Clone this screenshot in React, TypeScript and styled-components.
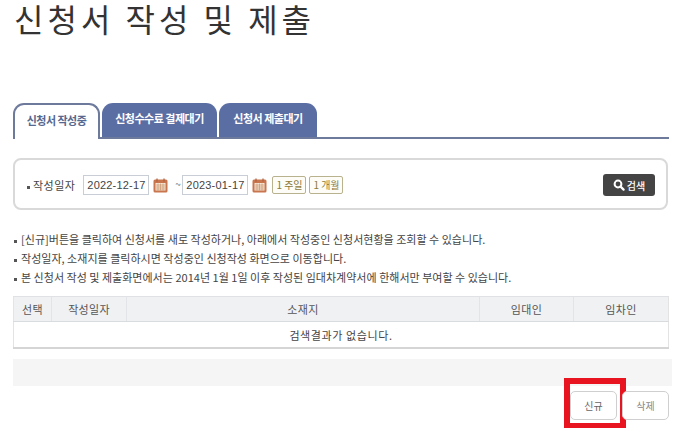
import styled, { createGlobalStyle } from 'styled-components';

const GlobalStyle = createGlobalStyle`
  html, body {
    margin: 0;
    padding: 0;
    background: #fff;
  }
  body {
    font-family: "Noto Sans CJK KR", "Liberation Sans", sans-serif;
    color: #444;
    overflow: hidden;
  }
`;

const SPage = styled.div`
  width: 677px;
  height: 432px;
  padding: 0 8px 0 13px;
  box-sizing: border-box;
`;
const STitle = styled.h1`
  margin: 0;
  padding: 0 0 0 1px;
  height: 103px;
  font-size: 32px;
  line-height: 37px;
  font-weight: 400;
  letter-spacing: 4px;
  color: #333;
`;
const STabs = styled.div`
  display: flex;
  gap: 2px;
  height: 34px;
  border-bottom: 2px solid #6d7a9c;
`;
const STab = styled.div<{ $active?: boolean; $width: number }>`
  width: ${({ $width }) => $width}px;
  height: ${({ $active }) => ($active ? 36 : 34)}px;
  box-sizing: border-box;
  display: flex;
  align-items: center;
  justify-content: center;
  padding-bottom: 4px;
  border-radius: 11px 11px 0 0;
  font-size: 11px;
  font-weight: 700;
  letter-spacing: -0.5px;
  color: ${({ $active }) => ($active ? '#56688f' : '#fff')};
  background: ${({ $active }) => ($active ? '#fff' : '#5b6ea3')};
  border: ${({ $active }) => ($active ? '2px solid #6d7a9c' : 'none')};
  border-bottom: none;
`;
const SSearchBox = styled.div`
  margin-top: 19px;
  height: 52px;
  width: 655px;
  box-sizing: border-box;
  border: 2px solid #d9d9d9;
  border-radius: 8px;
  display: flex;
  align-items: center;
  padding: 2px 11px 0 12px;
`;
const SLabel = styled.span`
  font-size: 11px;
  letter-spacing: 0.5px;
  color: #444;
  margin-right: 8px;
  &::before {
    content: '';
    display: inline-block;
    width: 3px;
    height: 3px;
    background: #555;
    vertical-align: middle;
    margin-right: 3px;
  }
`;
const SDateInput = styled.div`
  width: 66px;
  height: 20px;
  box-sizing: border-box;
  border: 1px solid #c9ced6;
  display: flex;
  align-items: center;
  justify-content: center;
  font-family: "Liberation Sans", sans-serif;
  font-size: 11px;
  letter-spacing: 0.2px;
  color: #444;
`;
const SCalendar = styled.svg`
  width: 15px;
  height: 15px;
  margin: 0 5px 0 4px;
  flex: none;
`;
const STilde = styled.span`
  width: 9px;
  margin-bottom: 3px;
  text-align: center;
  font-size: 10px;
  color: #777;
`;
const SPeriod = styled.button`
  width: 34px;
  height: 18px;
  padding: 0;
  margin: 0 3px 0 0;
  background: #fdfcf6;
  border: 1px solid #b9b28e;
  border-radius: 2px;
  font-family: inherit;
  font-size: 10px;
  line-height: 14px;
  color: #8c7a3a;
  white-space: nowrap;
`;
const SSearchButton = styled.button`
  margin-left: auto;
  width: 52px;
  height: 22px;
  background: #444;
  border: none;
  border-radius: 3px;
  color: #fff;
  font-family: inherit;
  font-size: 10px;
  font-weight: 500;
  display: flex;
  align-items: center;
  justify-content: center;
  gap: 2px;
  padding: 0;
`;
const SNotes = styled.ul`
  list-style: none;
  margin: 20px 0 0;
  padding: 0;
`;
const SNote = styled.li`
  height: 19px;
  font-size: 11px;
  line-height: 19px;
  letter-spacing: 0.02px;
  color: #444;
  white-space: nowrap;
  &::before {
    content: '';
    display: inline-block;
    width: 3px;
    height: 3px;
    background: #555;
    vertical-align: middle;
    margin: 0 4px 0 1px;
  }
`;
const STable = styled.table`
  margin-top: 9px;
  width: 656px;
  table-layout: fixed;
  border-collapse: collapse;
  border-bottom: 2px solid #d5d5d5;
  border-right: 1px solid #e3e3e3;
  border-left: 1px solid #e3e3e3;
  font-size: 11px;
`;
const STh = styled.th<{ $width?: number }>`
  width: ${({ $width }) => ($width ? `${$width}px` : 'auto')};
  height: 25px;
  padding: 0;
  box-sizing: border-box;
  background: #f0f1f3;
  border-top: 1px solid #dfe1e4;
  border-bottom: 1px solid #d9dcdf;
  border-left: 1px solid #e2e4e7;
  font-weight: 400;
  letter-spacing: 0.3px;
  color: #555;
`;
const STd = styled.td`
  height: 25px;
  padding: 0;
  text-align: center;
  color: #444;
  letter-spacing: 0.6px;
`;
const SStrip = styled.div`
  margin-top: 10px;
  height: 27px;
  width: 659px;
  background: #f5f5f5;
`;
const SActions = styled.div`
  margin-top: 5px;
  display: flex;
  justify-content: flex-end;
  gap: 5px;
`;
const SActionWrap = styled.div`
  position: relative;
`;
const SActionButton = styled.button<{ $muted?: boolean }>`
  width: 47px;
  height: 29px;
  padding: 0;
  background: #fff;
  border: 1px solid #cfcfcf;
  border-radius: 5px;
  font-family: inherit;
  font-size: 10px;
  color: ${({ $muted }) => ($muted ? '#888' : '#666')};
`;
const SHighlight = styled.div`
  position: absolute;
  left: -6px;
  top: -13px;
  width: 62px;
  height: 50px;
  box-sizing: border-box;
  border: 6px solid #e8141f;
  border-bottom-width: 5px;
  pointer-events: none;
`;

const CalendarIcon = () => (
  <SCalendar viewBox="0 0 15 15">
    <rect x="0.5" y="1.5" width="14" height="13" rx="1.5" fill="#c9764f" />
    <rect x="2.5" y="5" width="10" height="7.5" fill="#f6e6d6" />
    <path d="M3 7h9M3 9h9M3 11h9M5 5.5v7M7.5 5.5v7M10 5.5v7" stroke="#c9966f" strokeWidth="0.7" />
    <path d="M4 0.5v3M11 0.5v3" stroke="#a85f3c" strokeWidth="1.2" />
  </SCalendar>
);

const SearchIcon = () => (
  <svg width="12" height="12" viewBox="0 0 12 12">
    <circle cx="5" cy="5" r="3.4" fill="none" stroke="#fff" strokeWidth="2" />
    <path d="M7.6 7.6l3 3" stroke="#fff" strokeWidth="2.2" strokeLinecap="round" />
  </svg>
);

const notes = [
  '[신규]버튼을 클릭하여 신청서를 새로 작성하거나, 아래에서 작성중인 신청서현황을 조회할 수 있습니다.',
  '작성일자, 소재지를 클릭하시면 작성중인 신청작성 화면으로 이동합니다.',
  '본 신청서 작성 및 제출화면에서는 2014년 1월 1일 이후 작성된 임대차계약서에 한해서만 부여할 수 있습니다.',
];

const App = () => {
  return (
    <SPage>
      <GlobalStyle />
      <STitle>신청서 작성 및 제출</STitle>
      <STabs>
        <STab $active $width={87}>신청서 작성중</STab>
        <STab $width={115}>신청수수료 결제대기</STab>
        <STab $width={98}>신청서 제출대기</STab>
      </STabs>
      <SSearchBox>
        <SLabel>작성일자</SLabel>
        <SDateInput>2022-12-17</SDateInput>
        <CalendarIcon />
        <STilde>~</STilde>
        <SDateInput>2023-01-17</SDateInput>
        <CalendarIcon />
        <SPeriod>1 주일</SPeriod>
        <SPeriod>1 개월</SPeriod>
        <SSearchButton>
          <SearchIcon />
          검색
        </SSearchButton>
      </SSearchBox>
      <SNotes>
        {notes.map((note) => (
          <SNote key={note}>{note}</SNote>
        ))}
      </SNotes>
      <STable>
        <thead>
          <tr>
            <STh $width={38}>선택</STh>
            <STh $width={75}>작성일자</STh>
            <STh>소재지</STh>
            <STh $width={94}>임대인</STh>
            <STh $width={95}>임차인</STh>
          </tr>
        </thead>
        <tbody>
          <tr>
            <STd colSpan={5}>검색결과가 없습니다.</STd>
          </tr>
        </tbody>
      </STable>
      <SStrip />
      <SActions>
        <SActionWrap>
          <SActionButton>신규</SActionButton>
          <SHighlight />
        </SActionWrap>
        <SActionWrap>
          <SActionButton $muted>삭제</SActionButton>
        </SActionWrap>
      </SActions>
    </SPage>
  );
};

export default App;
